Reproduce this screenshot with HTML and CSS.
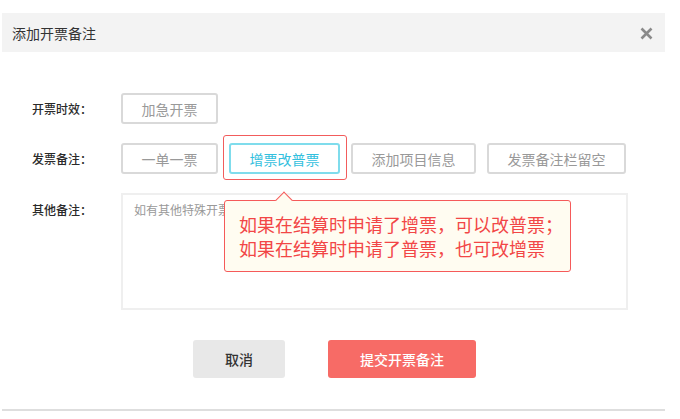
FILE: index.html
```html
<!DOCTYPE html>
<html lang="zh-CN">
<head>
<meta charset="utf-8">
<link rel="stylesheet" href="styles.css">
</head>
<body>
<div class="dialog">
  <div class="dialog-header">
    <span class="dialog-title">添加开票备注</span>
    <svg class="close" width="13" height="13" viewBox="0 0 13 13"><path d="M1.5 1.5 L11.5 11.5 M11.5 1.5 L1.5 11.5" stroke="#8a8a8a" stroke-width="2.6" stroke-linecap="butt"/></svg>
  </div>
  <div class="dialog-body">
    <div class="row">
      <div class="label">开票时效：</div>
      <div class="options">
        <button class="opt">加急开票</button>
      </div>
    </div>
    <div class="row">
      <div class="label">发票备注：</div>
      <div class="options">
        <button class="opt">一单一票</button>
        <div class="opt-wrap">
          <button class="opt active">增票改普票</button>
          <div class="tip">
            <span class="tip-arrow"></span>
            如果在结算时申请了增票，可以改普票；<br>如果在结算时申请了普票，也可改增票
          </div>
        </div>
        <button class="opt">添加项目信息</button>
        <button class="opt">发票备注栏留空</button>
      </div>
    </div>
    <div class="row">
      <div class="label label-top">其他备注：</div>
      <div class="remark"><span class="placeholder">如有其他特殊开票</span></div>
    </div>
    <div class="actions">
      <button class="btn btn-cancel">取消</button>
      <button class="btn btn-submit">提交开票备注</button>
    </div>
  </div>
</div>
</body>
</html>
```
FILE: styles.css
```css
* { box-sizing: border-box; }
body {
  margin: 0;
  background: #fff;
  font-family: "Noto Sans CJK SC", "Noto Sans", sans-serif;
  color: #333;
}
.dialog {
  margin: 13px 0 0 2px;
  width: 663px;
  border-bottom: 2px solid #dedede;
}
.dialog-header {
  height: 39px;
  background: #f3f3f3;
  display: flex;
  align-items: center;
  justify-content: space-between;
  padding: 0 12px 0 10px;
}
.dialog-title {
  font-size: 14px;
  color: #333;
  line-height: 1;
}
.close { display: block; margin-top: 1px; }
.dialog-body {
  padding: 41px 0 31px 30px;
}
.row {
  display: flex;
  align-items: center;
  margin-bottom: 19px;
}
.label {
  width: 89px;
  font-size: 12px;
  font-weight: 500;
  color: #2a2a2a;
  flex-shrink: 0;
}
.row:has(.label-top) { align-items: flex-start; }
.label-top { padding-top: 8px; }
.options {
  display: flex;
  gap: 11px;
}
.opt {
  height: 31px;
  padding: 0 18.5px;
  border: 2px solid #d9d9d9;
  border-radius: 3px;
  background: #fff;
  font-family: inherit;
  font-size: 14px;
  color: #999;
  line-height: 1;
}
.opt-wrap { position: relative; display: flex; }
.opt.active {
  border-color: #7fdcec;
  color: #33c0de;
}
.opt-wrap::before {
  content: "";
  position: absolute;
  left: -6px; right: -7px; top: -8px; bottom: -6px;
  border: 1px solid #f25c5c;
  border-radius: 3px;
  pointer-events: none;
}
.tip {
  position: absolute;
  left: -5px;
  top: 57px;
  width: 347px;
  height: 72px;
  padding: 11px 0 0 14px;
  background: #fffcf1;
  border: 1px solid #f55a5a;
  border-radius: 3px;
  color: #f24646;
  font-size: 18px;
  font-weight: 400;
  line-height: 24px;
  white-space: nowrap;
  z-index: 2;
}
.tip-arrow {
  position: absolute;
  left: 53px;
  top: -7px;
  width: 12px;
  height: 12px;
  background: #fffcf1;
  border-left: 1px solid #f55a5a;
  border-top: 1px solid #f55a5a;
  transform: rotate(45deg);
}
.remark {
  width: 507px;
  height: 117px;
  border: 2px solid #efefef;
  padding: 6px 11px;
  font-size: 12px;
  color: #999;
  line-height: 18px;
}
.actions {
  display: flex;
  justify-content: center;
  gap: 43px;
  margin-top: 30px;
  margin-left: -30px;
  padding-left: 2px;
}
.btn {
  height: 38px;
  border: none;
  border-radius: 3px;
  font-family: inherit;
  font-size: 14px;
  font-weight: 500;
  line-height: 1;
}
.btn-cancel {
  width: 92px;
  background: #e8e8e8;
  color: #333;
}
.btn-submit {
  width: 148px;
  background: #f76b66;
  color: #fff;
}
```
